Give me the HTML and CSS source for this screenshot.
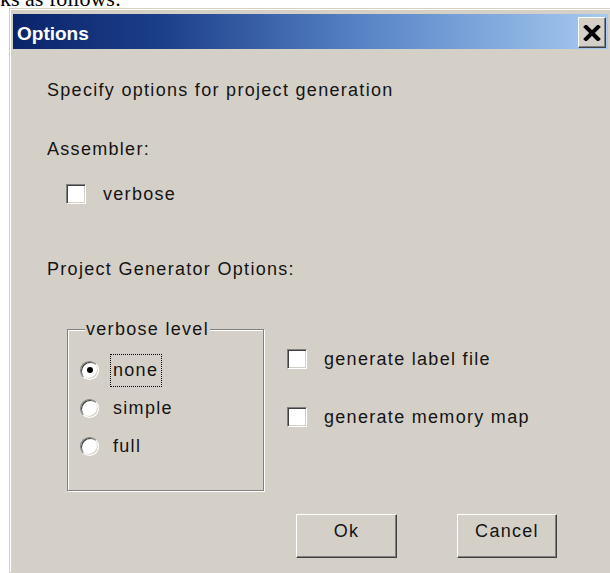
FILE: index.html
```html
<!DOCTYPE html>
<html lang="en">
<head>
<meta charset="utf-8">
<title>Options</title>
<link rel="stylesheet" href="styles.css">
</head>
<body>
<div class="caption"><span>ks as follows:</span></div>

<div class="dialog">
  <div class="titlebar">
    <span class="title">Options</span>
    <button class="close" type="button" aria-label="Close">
      <svg width="18" height="16" viewBox="0 0 18 16">
        <path d="M3 2 L15 14 M15 2 L3 14" stroke="#000" stroke-width="4" stroke-linecap="square" fill="none"/>
      </svg>
    </button>
  </div>

  <div class="content">
    <p class="line intro">Specify options for project generation</p>

    <p class="line section">Assembler:</p>
    <div class="check indent">
      <span class="box"></span>
      <span class="label">verbose</span>
    </div>

    <p class="line section gen-title">Project Generator Options:</p>

    <div class="gen-row">
      <fieldset class="group">
        <legend>verbose level</legend>
        <div class="radio-row">
          <span class="radio on"></span>
          <span class="radio-label focus">none</span>
        </div>
        <div class="radio-row">
          <span class="radio"></span>
          <span class="radio-label">simple</span>
        </div>
        <div class="radio-row">
          <span class="radio"></span>
          <span class="radio-label">full</span>
        </div>
      </fieldset>

      <div class="checks">
        <div class="check">
          <span class="box"></span>
          <span class="label">generate label file</span>
        </div>
        <div class="check second">
          <span class="box"></span>
          <span class="label">generate memory map</span>
        </div>
      </div>
    </div>

    <div class="actions">
      <button class="btn ok" type="button">Ok</button>
      <button class="btn cancel" type="button">Cancel</button>
    </div>
  </div>
</div>
</body>
</html>
```

FILE: styles.css
```css
html,
body {
  margin: 0;
  padding: 0;
  width: 610px;
  height: 573px;
  overflow: hidden;
  background: #fff;
}

body {
  font-family: "Liberation Sans", Arial, sans-serif;
}

/* tail of the document sentence above the dialog */
.caption {
  height: 8px;
  overflow: hidden;
  font-family: "Liberation Serif", "Times New Roman", serif;
  font-size: 22px;
  line-height: 22px;
  color: #000;
}

.caption span {
  display: block;
  margin-top: -12px;
  white-space: nowrap;
}

/* window frame */
.dialog {
  margin-left: 9px;
  width: 603px;
  height: 565px;
  box-sizing: border-box;
  background: #d4d0c8;
  border: 1px solid #d4d0c8;
  box-shadow: inset 1px 1px 0 #fff;
  padding: 5px 3px 0 3px;
  overflow: hidden;
}

.titlebar {
  display: flex;
  align-items: flex-start;
  height: 35px;
  box-sizing: border-box;
  padding-top: 3px;
  background: linear-gradient(to right, #0a246a 0%, #1c3f8a 25%, #5a86c8 60%, #a6caf0 100%);
}

.title {
  flex: 1;
  padding: 6px 0 0 4px;
  color: #fff;
  font-weight: bold;
  font-size: 19px;
  line-height: 21px;
}

.close {
  width: 28px;
  height: 31px;
  margin: 0 2px 0 0;
  padding: 0;
  display: flex;
  align-items: center;
  justify-content: center;
  background: #d4d0c8;
  border: 1px solid;
  border-color: #fff #404040 #404040 #fff;
  box-shadow: inset -1px -1px 0 #808080;
}

/* dialog body */
.content {
  padding: 30px 0 0 34px;
  color: #141414;
  font-size: 18px;
  line-height: 22px;
  letter-spacing: 1.3px;
}

.line {
  margin: 0;
  white-space: nowrap;
}

.section {
  margin-top: 37px;
}

.gen-title {
  margin-top: 53px;
}

/* checkboxes */
.check {
  display: flex;
  align-items: center;
  height: 22px;
  white-space: nowrap;
}

.check.indent {
  margin: 23px 0 0 19px;
}

.box {
  width: 20px;
  height: 20px;
  box-sizing: border-box;
  flex: none;
  background: #fff;
  border: 1px solid;
  border-color: #808080 #fff #fff #808080;
  box-shadow: inset 1px 1px 0 #404040, inset -1px -1px 0 #d4d0c8;
}

.check .label {
  margin-left: 17px;
}

/* generator options row */
.gen-row {
  display: flex;
  align-items: flex-start;
  margin-top: 38px;
}

.group {
  margin: 0 0 0 20px;
  width: 197px;
  box-sizing: border-box;
  padding: 11px 0 25px 12px;
  border: 1px solid #808080;
  box-shadow: 1px 1px 0 #fff, inset 1px 1px 0 #fff;
}

.group legend {
  padding: 0 1px;
  margin-left: 5px;
  line-height: 22px;
  background: #d4d0c8;
  white-space: nowrap;
}

.radio-row {
  display: flex;
  align-items: center;
  height: 38px;
}

.radio {
  width: 19px;
  height: 19px;
  box-sizing: border-box;
  flex: none;
  border-radius: 50%;
  background: #fff;
  border: 1px solid;
  border-color: #808080 #fff #fff #808080;
  box-shadow: inset 1px 1px 0 #404040, inset -1px -1px 0 #d4d0c8;
  display: flex;
  align-items: center;
  justify-content: center;
}

.radio.on::after {
  content: "";
  width: 6px;
  height: 6px;
  border-radius: 50%;
  background: #000;
}

.radio-label {
  display: flex;
  align-items: center;
  height: 33px;
  box-sizing: border-box;
  margin-left: 11px;
  padding: 0 3px 0 2px;
  border: 1px dotted transparent;
}

.radio-label.focus {
  border-color: #000;
}

.checks {
  margin: 30px 0 0 23px;
}

.check.second {
  margin-top: 36px;
}

/* push buttons */
.actions {
  display: flex;
  gap: 60px;
  margin: 23px 0 0 249px;
}

.btn {
  height: 44px;
  padding: 0 0 10px;
  font: inherit;
  letter-spacing: 1.3px;
  color: #141414;
  background: #d4d0c8;
  border: 1px solid;
  border-color: #fff #404040 #404040 #fff;
  box-shadow: inset -1px -1px 0 #808080;
}

.btn.ok {
  width: 101px;
}

.btn.cancel {
  width: 100px;
}
```
